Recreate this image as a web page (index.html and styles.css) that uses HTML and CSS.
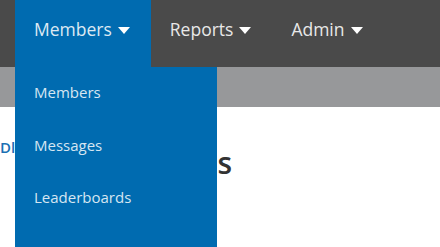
FILE: index.html
```html
<html>
<head>
   <meta charset="utf-8">
   <link rel="stylesheet" href="styles.css">
</head>
<body>
   <div class="topnav">
      <div class="nav-item nav-item-open">
         <span>Members</span><span class="caret"></span>
         <ul class="dropdown">
            <li>Members</li>
            <li>Messages</li>
            <li>Leaderboards</li>
         </ul>
      </div>
      <div class="nav-item"><span>Reports</span><span class="caret"></span></div>
      <div class="nav-item"><span>Admin</span><span class="caret"></span></div>
   </div>
   <div class="subbar"></div>
   <div class="content">
      <div class="crumbs">Dl</div>
      <h1 class="page-title">Members</h1>
   </div>
</body>
</html>
```

FILE: styles.css
```css
body {
   margin: 0;
   font-family: "Open Sans", sans-serif;
   background-color: white;
   overflow: hidden;
}
.topnav {
   display: flex;
   height: 67px;
   padding-left: 15px;
   background-color: #4a4a4a;
}
.nav-item {
   position: relative;
   display: flex;
   align-items: center;
   gap: 6px;
   padding: 0 21px 9px 19px;
   color: #e8e8e8;
   font-size: 17.5px;
   line-height: 24px;
}
.nav-item-open {
   background-color: #006bb0;
   color: #dde9f3;
}
.caret {
   width: 0;
   height: 0;
   border-left: 6px solid transparent;
   border-right: 6px solid transparent;
   border-top: 7px solid white;
   margin-top: 2px;
}
.dropdown {
   position: absolute;
   top: 67px;
   left: 0;
   width: 202px;
   height: 180px;
   box-sizing: border-box;
   margin: 0;
   padding: 6px 0 0 0;
   list-style: none;
   background-color: #006bb0;
   z-index: 2;
}
.dropdown li {
   padding-left: 19px;
   height: 52.5px;
   line-height: 38px;
   font-size: 15px;
   color: #d6e6f2;
}
.subbar {
   height: 40px;
   background-color: #97989a;
}
.content {
   display: flex;
   align-items: flex-start;
   height: 140px;
}
.crumbs {
   width: 20px;
   flex-shrink: 0;
   margin-top: 30px;
   color: #1b6fb3;
   font-size: 15px;
   font-weight: 600;
   white-space: nowrap;
}
.page-title {
   width: 214px;
   flex-shrink: 0;
   margin: 36px 0 0 0;
   text-align: right;
   font-size: 30px;
   line-height: 40px;
   font-weight: 600;
   letter-spacing: 2px;
   color: #333333;
}
```
